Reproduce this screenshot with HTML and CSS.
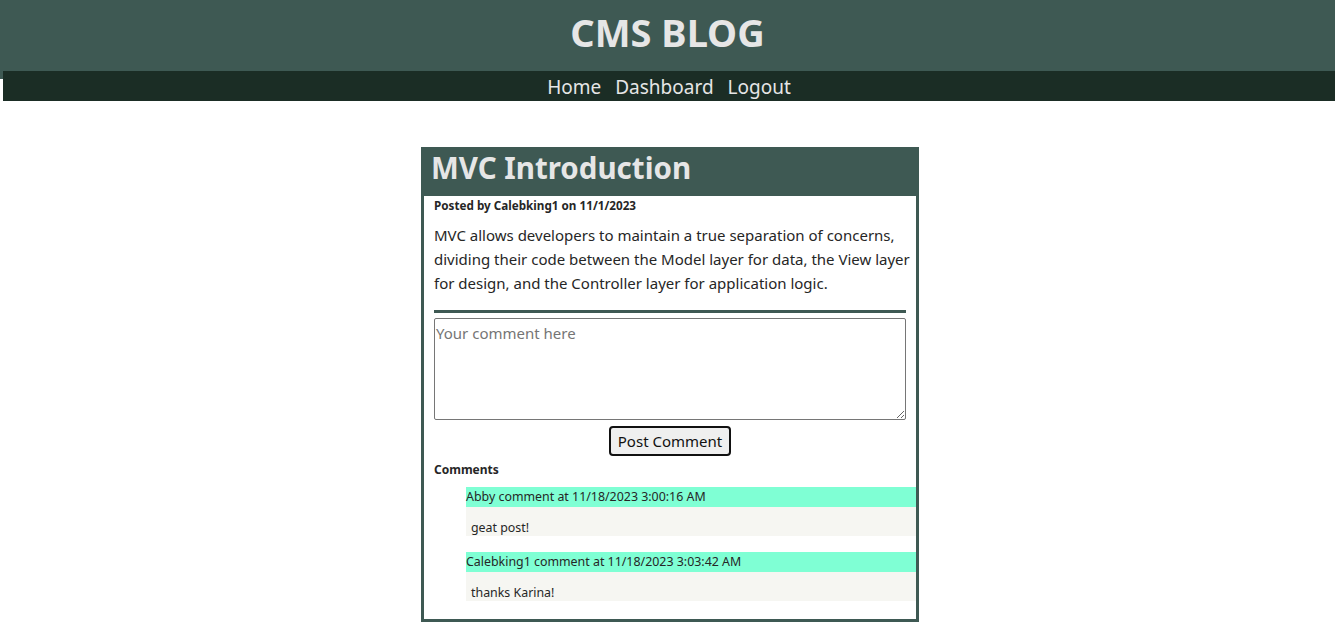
FILE: index.html
```html
<!DOCTYPE html>
<html lang="en">
<head>
<meta charset="utf-8">
<title>CMS Blog</title>
<link rel="stylesheet" href="styles.css">
</head>
<body>
<header class="site-header">
  <h1 class="site-title">CMS BLOG</h1>
  <nav class="site-nav">
    <a href="#">Home</a>
    <a href="#">Dashboard</a>
    <a href="#">Logout</a>
  </nav>
</header>
<main class="main">
  <article class="post">
    <h2 class="post-title">MVC Introduction</h2>
    <div class="post-body">
      <p class="post-meta">Posted by Calebking1 on 11/1/2023</p>
      <p class="post-text">MVC allows developers to maintain a true separation of concerns, dividing their code between the Model layer for data, the View layer for design, and the Controller layer for application logic.</p>
      <div class="rule"></div>
      <form class="comment-form">
        <textarea class="comment-input" placeholder="Your comment here"></textarea>
        <button type="button" class="comment-btn">Post Comment</button>
      </form>
      <h3 class="comments-title">Comments</h3>
      <ul class="comments">
        <li class="comment">
          <div class="comment-head">Abby comment at 11/18/2023 3:00:16 AM</div>
          <div class="comment-text">geat post!</div>
        </li>
        <li class="comment">
          <div class="comment-head">Calebking1 comment at 11/18/2023 3:03:42 AM</div>
          <div class="comment-text">thanks Karina!</div>
        </li>
      </ul>
    </div>
  </article>
</main>
</body>
</html>
```

FILE: styles.css
```css
* { box-sizing: border-box; }
html, body { margin: 0; padding: 0; }
body {
  font-family: "Noto Sans", "Open Sans", sans-serif;
  color: #262626;
  background: #fff;
}
.site-header {
  background: #3e5953;
  height: 79px;
}
.site-title {
  margin: 0;
  height: 71px;
  display: flex;
  align-items: center;
  justify-content: center;
  font-size: 38px;
  font-weight: 700;
  color: #e6e6e6;
  padding-bottom: 8px;
}
.site-nav {
  position: relative;
  margin-left: 3px;
  height: 30px;
  background: #1b2d25;
  display: flex;
  justify-content: center;
  align-items: center;
  gap: 14px;
  padding-top: 2px;
}
.site-nav a {
  color: #e6e6e6;
  text-decoration: none;
  font-size: 19px;
}
.main {
  display: flex;
  justify-content: center;
  padding-top: 68px;
  padding-bottom: 11px;
}
.post {
  width: 498px;
  border: 3px solid #3e5953;
  margin-left: 5px;
}
.post-title {
  margin: 0;
  background: #3e5953;
  color: #e6e6e6;
  font-size: 29.5px;
  font-weight: 700;
  height: 46px;
  line-height: 36px;
  padding-left: 7px;
}
.post-body {
  padding: 0 0 18px 10px;
}
.post-meta {
  margin: 0;
  padding-top: 1px;
  font-size: 11.7px;
  font-weight: 700;
  line-height: 17px;
}
.post-text {
  margin: 9px 0 0;
  font-size: 15px;
  line-height: 24px;
}
.rule {
  width: 472px;
  height: 3px;
  background: #3e5953;
  margin-top: 15px;
}
.comment-form {
  width: 472px;
  display: flex;
  flex-direction: column;
  align-items: center;
  margin-top: 5px;
}
.comment-input {
  width: 472px;
  height: 102px;
  border: 1px solid #767676;
  border-radius: 2px;
  font-family: inherit;
  font-size: 15px;
  padding: 4px 1px;
  color: #222;
  resize: both;
}
.comment-input::placeholder { color: #757575; }
.comment-btn {
  margin-top: 6px;
  font-family: inherit;
  font-size: 15px;
  height: 30px;
  padding: 0 7px;
  background: #efefef;
  border: 2px solid #111;
  border-radius: 4px;
  color: #111;
}
.comments-title {
  margin: 5px 0 0;
  font-size: 12px;
  font-weight: 700;
  line-height: 18px;
}
.comments {
  list-style: none;
  margin: 8px 0 0 32px;
  padding: 0;
  display: flex;
  flex-direction: column;
  gap: 16px;
}
.comment-head {
  background: #7fffd4;
  height: 20px;
  line-height: 20px;
  font-size: 12.4px;
}
.comment-text {
  background: #f6f6f2;
  height: 29px;
  line-height: 17px;
  padding-top: 12px;
  font-size: 12.4px;
  padding-left: 5px;
}
```
